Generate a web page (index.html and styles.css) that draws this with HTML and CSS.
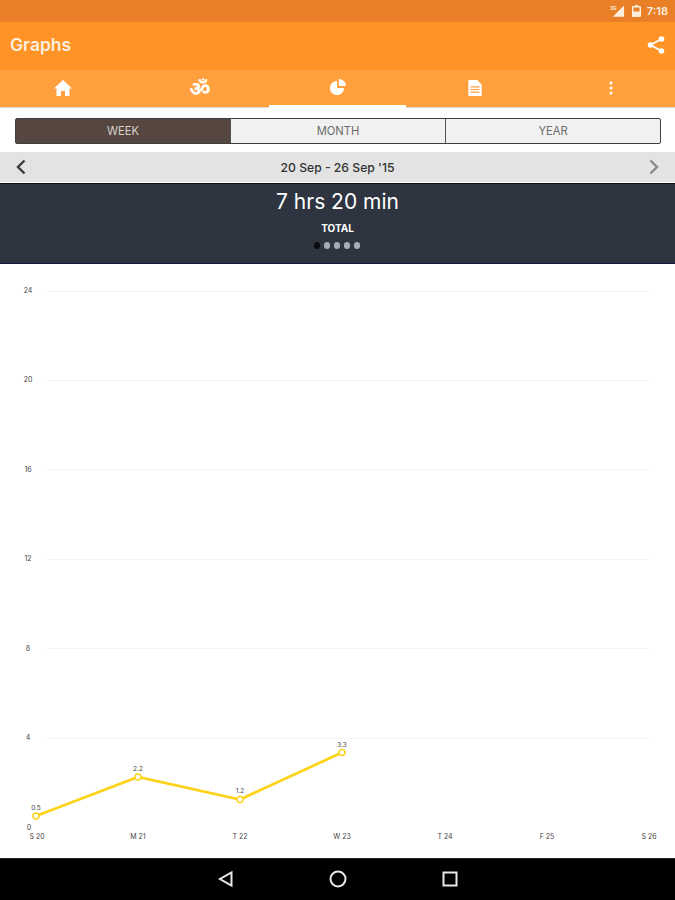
FILE: index.html
```html
<!DOCTYPE html>
<html lang="en">
<head>
  <meta charset="UTF-8">
  <meta name="viewport" content="width=device-width, initial-scale=1.0">
  <title>Graphs</title>
  <link rel="stylesheet" href="styles.css">
</head>
<body>
  <div class="screen">
    <div class="status-bar">
      <svg class="status-signal" viewBox="0 0 16 12"><path d="M15 0v12H3z"/><text x="0" y="5" class="status-3g">3G</text></svg>
      <svg class="status-battery" viewBox="0 0 9 12"><path d="M3 0h3v1h2a1 1 0 0 1 1 1v9a1 1 0 0 1-1 1H1a1 1 0 0 1-1-1V2a1 1 0 0 1 1-1h2z"/><path class="status-hole" d="M1.5 2.5h6v4h-6z"/></svg>
      <span class="status-time">7:18</span>
    </div>

    <header class="app-bar">
      <h1 class="app-title">Graphs</h1>
      <svg class="share-icon" viewBox="0 0 18 18">
        <path d="M14.5 3 3.5 9l11 6" fill="none" stroke="#fff" stroke-width="1.8"/>
        <circle cx="14.5" cy="3" r="2.8"/>
        <circle cx="3.5" cy="9" r="2.8"/>
        <circle cx="14.5" cy="15" r="2.8"/>
      </svg>
    </header>

    <nav class="tabs">
      <div class="tab">
        <svg class="tab-icon" viewBox="0 0 18 16"><path d="M9 0 18 8.500h-2.500V16H11v-5H7v5H2.500V8.500H0z"/></svg>
      </div>
      <div class="tab">
        <span class="om">ॐ</span>
      </div>
      <div class="tab tab-active">
        <svg class="tab-icon" viewBox="0 0 18 18"><path d="M8 2.200V10h7.800A8 8 0 1 1 8 2.200z"/><path d="M10 0a8 8 0 0 1 8 8h-8z"/></svg>
      </div>
      <div class="tab">
        <svg class="tab-icon" viewBox="0 0 15 18"><path fill-rule="evenodd" d="M0 0h10l5 5v13H0zM2.500 7v1.300h10V7zm0 3v1.300h10V10zm0 3v1.300h10V13z"/></svg>
      </div>
      <div class="tab">
        <svg class="tab-icon tab-menu" viewBox="0 0 4 14"><circle cx="2" cy="2" r="1.500"/><circle cx="2" cy="7" r="1.500"/><circle cx="2" cy="12" r="1.500"/></svg>
      </div>
    </nav>

    <div class="range-wrap">
      <div class="range">
        <div class="range-item range-on">WEEK</div>
        <div class="range-item">MONTH</div>
        <div class="range-item">YEAR</div>
      </div>
    </div>

    <div class="date-bar">
      <svg class="arrow" viewBox="0 0 10 16"><path d="M8.500 1.500 2 8l6.500 6.500" fill="none" stroke="#3c3c3c" stroke-width="2.400"/></svg>
      <span class="date-text">20 Sep - 26 Sep '15</span>
      <svg class="arrow" viewBox="0 0 10 16"><path d="M1.500 1.500 8 8l-6.500 6.500" fill="none" stroke="#8a8a8a" stroke-width="2.400"/></svg>
    </div>

    <section class="summary">
      <div class="summary-value">7 hrs 20 min</div>
      <div class="summary-label">TOTAL</div>
      <div class="dots">
        <span class="dot dot-on"></span>
        <span class="dot"></span>
        <span class="dot"></span>
        <span class="dot"></span>
        <span class="dot"></span>
      </div>
    </section>

    <main class="chart">
      <svg class="chart-svg" viewBox="0 0 675 594">
        <g class="grid">
          <path d="M46 27.500H650"/>
          <path d="M46 116.500H650"/>
          <path d="M46 205.500H650"/>
          <path d="M46 295.500H650"/>
          <path d="M46 384.500H650"/>
          <path d="M46 474.500H650"/>
        </g>
        <g class="y-labels">
          <text x="28" y="29">24</text>
          <text x="28" y="118">20</text>
          <text x="28" y="208">16</text>
          <text x="28" y="297">12</text>
          <text x="28" y="387">8</text>
          <text x="28" y="476">4</text>
          <text x="29" y="566">0</text>
        </g>
        <polyline class="line" points="36,552 138,513 240,535.500 342,488.500"/>
        <g class="points">
          <circle cx="36" cy="552" r="3"/>
          <circle cx="138" cy="513" r="3"/>
          <circle cx="240" cy="535.500" r="3"/>
          <circle cx="342" cy="488.500" r="3"/>
        </g>
        <g class="values">
          <text x="36" y="546">0.5</text>
          <text x="138" y="507">2.2</text>
          <text x="240" y="529">1.2</text>
          <text x="342" y="483">3.3</text>
        </g>
        <g class="x-labels">
          <text x="37" y="575">S 20</text>
          <text x="138" y="575">M 21</text>
          <text x="240" y="575">T 22</text>
          <text x="342" y="575">W 23</text>
          <text x="445" y="575">T 24</text>
          <text x="547" y="575">F 25</text>
          <text x="649" y="575">S 26</text>
        </g>
      </svg>
    </main>

    <footer class="nav-bar">
      <svg class="nav-icon" viewBox="0 0 18 18"><path d="M14.500 2.500v13L3 9z"/></svg>
      <svg class="nav-icon" viewBox="0 0 18 18"><circle cx="9" cy="9" r="7.500"/></svg>
      <svg class="nav-icon" viewBox="0 0 18 18"><path d="M2.500 2.500h13v13h-13z"/></svg>
    </footer>
  </div>
</body>
</html>
```

FILE: styles.css
```css
* {
  box-sizing: border-box;
}

body {
  margin: 0;
  font-family: "Inter", "Liberation Sans", sans-serif;
  background: #fff;
}

.screen {
  width: 675px;
  height: 900px;
  display: flex;
  flex-direction: column;
  overflow: hidden;
}

/* status bar */
.status-bar {
  height: 22px;
  background: #e98027;
  display: flex;
  align-items: center;
  justify-content: flex-end;
  padding-right: 7px;
  color: #fdeedd;
}
.status-signal {
  width: 15px;
  height: 12px;
  fill: #fdeedd;
  margin-right: 7px;
}
.status-3g {
  font-size: 5px;
  font-weight: 700;
}
.status-battery {
  width: 9px;
  height: 12px;
  fill: #fdeedd;
  margin-right: 6px;
}
.status-hole {
  fill: #e98027;
}
.status-time {
  font-size: 11px;
  font-weight: 600;
}

/* app bar */
.app-bar {
  height: 48px;
  background: #ff9326;
  display: flex;
  align-items: center;
  justify-content: space-between;
  padding: 0 10px 3px;
}
.app-title {
  margin: 0;
  font-size: 17.500px;
  font-weight: 600;
  color: #fdeedd;
}
.share-icon {
  width: 18px;
  height: 18px;
  fill: #fff;
}

/* tabs, a bit wider than the screen so they spread out from the middle */
.tabs {
  height: 38px;
  background: #ff9f3e;
  border-bottom: 1px solid #d9d9d9;
  display: flex;
  justify-content: center;
}
.tab {
  flex: none;
  width: 137.500px;
  display: flex;
  align-items: center;
  justify-content: center;
  padding-bottom: 1px;
}
.tab-active {
  border-bottom: 3px solid #fff;
  padding-bottom: 0;
  margin-bottom: -0.5px;
}
.tab-icon {
  height: 16px;
  width: 18px;
  fill: #fff;
}
.tab-menu {
  height: 14px;
  margin-right: 3px;
}
.om {
  font-family: "Noto Sans", "DejaVu Sans", sans-serif;
  font-size: 21px;
  line-height: 18px;
  font-weight: 700;
  color: #fff;
}

/* week month year */
.range-wrap {
  height: 44px;
  padding: 10px 14px 8px 15px;
  background: #fff;
}
.range {
  height: 26px;
  display: flex;
  border: 1px solid #3f3f3f;
  border-radius: 2px;
  background: #f1f1f1;
}
.range-item {
  flex: 1;
  display: flex;
  align-items: center;
  justify-content: center;
  font-size: 11.200px;
  color: #6b6b6b;
  border-left: 1px solid #555;
}
.range-item:first-child {
  border-left: 0;
}
.range-on {
  background: #55463f;
  color: #d6d2cf;
}

/* date */
.date-bar {
  height: 30px;
  background: #e3e3e3;
  display: flex;
  align-items: center;
  justify-content: space-between;
  padding: 0 16px;
}
.arrow {
  width: 10px;
  height: 16px;
}
.date-text {
  font-size: 12.200px;
  font-weight: 500;
  color: #333;
}

/* summary */
.summary {
  height: 81px;
  margin-top: 1px;
  background: #2e3440;
  border-top: 1px solid #0c0f16;
  border-bottom: 1px solid #14183a;
  color: #fff;
  display: flex;
  flex-direction: column;
  align-items: center;
  padding-top: 6px;
}
.summary-value {
  font-size: 21px;
  line-height: 24px;
}
.summary-label {
  font-size: 10px;
  font-weight: 700;
  line-height: 12px;
  margin-top: 8px;
}
.dots {
  display: flex;
  gap: 3.500px;
  margin-top: 8px;
  margin-left: -1px;
}
.dot {
  width: 6.500px;
  height: 6.500px;
  border-radius: 50%;
  background: #a9adb3;
}
.dot-on {
  background: #0b0d12;
}

/* chart */
.chart {
  flex: 1;
  background: #fff;
}
.chart-svg {
  display: block;
  width: 675px;
  height: 594px;
  font-size: 7px;
}
.grid path {
  stroke: #f3f3f3;
  stroke-width: 1;
}
.y-labels text {
  text-anchor: middle;
  fill: #444;
}
.x-labels text {
  text-anchor: middle;
  fill: #444;
}
.values text {
  text-anchor: middle;
  fill: #444;
  font-size: 6.500px;
}
.line {
  fill: none;
  stroke: #fdd31c;
  stroke-width: 2.800;
}
.points circle {
  fill: #fff;
  stroke: #fdd31c;
  stroke-width: 1.500;
}

/* android nav */
.nav-bar {
  height: 42px;
  background: #000;
  border-top: 1px solid #222;
  display: flex;
  justify-content: center;
  align-items: center;
  gap: 94px;
  padding-bottom: 2px;
}
.nav-icon {
  width: 18px;
  height: 18px;
  fill: none;
  stroke: #e8e8e8;
  stroke-width: 2;
}
```
